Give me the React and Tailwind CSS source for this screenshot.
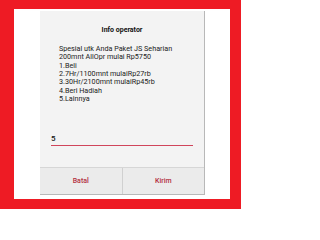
import React from 'react';

const lines = [
    'Spesial utk Anda Paket JS Seharian',
    '200mnt AllOpr mulai Rp5750',
    '1.Beli',
    '2.7Hr/1100mnt mulaiRp27rb',
    '3.30Hr/2100mnt mulaiRp45rb',
    '4.Beri Hadiah',
    '5.Lainnya'
];

const App = () => {
    return (
        <div
            className="w-[241px] h-[209px] bg-[#ee1b24] pt-[9px] pl-[14px] pr-[11px] pb-[10px]"
            style={{ fontFamily: 'Roboto, "Noto Sans", sans-serif' }}
        >
            <div className="h-full bg-white pt-[2px] pl-[26px] pr-[25px] pb-[4px]">
                <div className="h-full flex flex-col bg-[#f3f3f3] border-r border-b border-[#b8b8b8]">
                    <div className="pt-[15px] h-[25px] text-center text-[7px] leading-[9px] font-bold text-[#111]">
                        Info operator
                    </div>
                    <div className="pl-[19px] pt-[9px] text-[7.2px] leading-[8.33px] text-[#222]">
                        {lines.map((line) => (
                            <div key={line}>{line}</div>
                        ))}
                    </div>
                    <div className="mt-auto px-[11px] mb-[21px]">
                        <div className="text-[8px] leading-[10px] font-medium text-[#111] pb-[1px]">5</div>
                        <div className="h-[1px] bg-[#d0455b]" />
                    </div>
                    <div className="h-[27px] flex border-t border-[#d6d6d6] bg-[#ebebeb]">
                        <div className="flex-1 flex items-center justify-center border-r border-[#d0d0d0] text-[7px] font-medium text-[#b3303f]">
                            Batal
                        </div>
                        <div className="flex-1 flex items-center justify-center text-[7px] font-medium text-[#b3303f]">
                            Kirim
                        </div>
                    </div>
                </div>
            </div>
        </div>
    );
};

export default App;
